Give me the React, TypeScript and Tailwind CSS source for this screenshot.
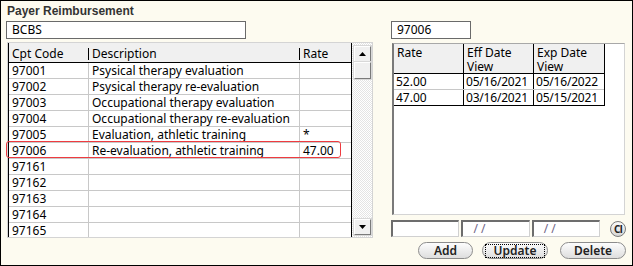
import React from 'react';

const codes = [
    { code: '97001', desc: 'Psysical therapy evaluation', rate: '' },
    { code: '97002', desc: 'Psysical therapy re-evaluation', rate: '' },
    { code: '97003', desc: 'Occupational therapy evaluation', rate: '' },
    { code: '97004', desc: 'Occupational therapy re-evaluation', rate: '' },
    { code: '97005', desc: 'Evaluation, athletic training', rate: '*' },
    { code: '97006', desc: 'Re-evaluation, athletic training', rate: '47.00' },
    { code: '97161', desc: '', rate: '' },
    { code: '97162', desc: '', rate: '' },
    { code: '97163', desc: '', rate: '' },
    { code: '97164', desc: '', rate: '' },
    { code: '97165', desc: '', rate: '' },
];

const rates = [
    { rate: '52.00', eff: '05/16/2021', exp: '05/16/2022' },
    { rate: '47.00', eff: '03/16/2021', exp: '05/15/2021' },
];

const ArrowBtn = ({ down }: { down?: boolean }) => (
    <div className="flex h-[16px] w-[17px] items-center justify-center border border-t-white border-l-white border-r-[#7a7a7a] border-b-[#7a7a7a] bg-[#f0f0f0] shadow-[0_0_0_1px_#d8d8d8]">
        <svg width="7" height="4" viewBox="0 0 7 4">
            {down ? <polygon points="0,0 7,0 3.5,4" fill="#000" /> : <polygon points="0,4 7,4 3.5,0" fill="#000" />}
        </svg>
    </div>
);

const PillButton = ({ label, width, focused }: { label: string; width: string; focused?: boolean }) => (
    <button
        className={`flex h-[17px] ${width} items-center justify-center rounded-full border border-[#8c8c8c] bg-gradient-to-b from-[#fdfdfd] to-[#dedede] text-[12px] font-semibold leading-none text-[#222]`}
    >
        {focused ? (
            <span className="flex h-[14px] w-[calc(100%-4px)] items-center justify-center border border-dotted border-black">{label}</span>
        ) : (
            label
        )}
    </button>
);

const dateBox =
    'flex h-[17px] w-[69px] items-center border-t-2 border-l-2 border-r border-b border-t-[#6d6d6d] border-l-[#6d6d6d] border-r-[#d0d0d0] border-b-[#d0d0d0] bg-white pl-[10px] leading-none text-[#6f6486]';

export default function App() {
    return (
        <div className="relative h-[266px] w-[633px] border border-black bg-[#fdfbf0] font-['Noto_Sans',sans-serif] text-[12px] text-black">
            <div className="h-[20px] pl-[6px] pt-[2px] font-['Liberation_Sans',Arial,sans-serif] text-[12px] font-bold leading-[16px] text-[#333]">
                Payer Reimbursement
            </div>

            <div className="flex">
                {/* left: payer codes */}
                <div className="ml-[5px] w-[367px]">
                    <div className="flex h-[18px] w-[240px] items-center border border-[#6a6a6a] bg-white pl-[5px] leading-none">BCBS</div>

                    <div className="ml-[1px] mt-[3px] flex h-[196px] w-[366px] border border-[#d4d4d4] bg-white">
                        <div className="w-[344px] overflow-hidden border-l border-r border-black">
                            <div className="flex h-[20px] items-center border-b border-black bg-[#f0f0f0] pt-[2px] leading-none">
                                <div className="w-[80px] border-r border-black pl-[3px]">Cpt Code</div>
                                <div className="w-[211px] border-r border-black pl-[3px]">Description</div>
                                <div className="flex-1 pl-[3px]">Rate</div>
                            </div>
                            {codes.map((r) => (
                                <div key={r.code} className="flex h-[16px] items-center border-b border-[#c8c8c8] leading-none">
                                    <div className="flex h-full w-[80px] items-center border-r border-[#c8c8c8] pl-[3px]">{r.code}</div>
                                    <div className="flex h-full w-[211px] items-center border-r border-[#c8c8c8] pl-[3px]">{r.desc}</div>
                                    <div className="flex h-full flex-1 items-center pl-[3px]">{r.rate}</div>
                                </div>
                            ))}
                        </div>
                        <div className="flex flex-1 flex-col items-center bg-[repeating-conic-gradient(#e4e4e4_0%_25%,#ffffff_0%_50%)] bg-[length:2px_2px] pt-[3px] pb-[2px]">
                            <ArrowBtn />
                            <div className="h-[17px] w-[17px] border border-t-white border-l-white border-r-[#7a7a7a] border-b-[#7a7a7a] bg-[#f0f0f0] shadow-[0_0_0_1px_#d8d8d8]" />
                            <div className="flex-1" />
                            <ArrowBtn down />
                        </div>
                    </div>
                </div>

                {/* right: rate history */}
                <div className="ml-[18px] w-[235px]">
                    <div className="flex h-[18px] w-[80px] items-center border border-[#6a6a6a] bg-white pl-[5px] leading-none">97006</div>

                    <div className="ml-[1px] mt-[4px] h-[172px] w-[233px] border-t border-l-2 border-r border-b border-t-[#a8a8a8] border-l-[#7a7a7a] border-r-[#d4d4d4] border-b-[#d4d4d4] bg-white">
                        <div className="w-[211px] border-r border-black">
                            <div className="flex h-[30px] border-b border-black bg-[#f0f0f0] leading-[14px]">
                                <div className="w-[70px] border-r border-black pl-[3px] pt-[2px]">Rate</div>
                                <div className="w-[70px] border-r border-black pl-[3px] pt-[2px]">Eff Date<br />View</div>
                                <div className="flex-1 pl-[3px] pt-[2px]">Exp Date<br />View</div>
                            </div>
                            {rates.map((r, i) => (
                                <div key={r.eff} className={`flex h-[16px] leading-none ${i === rates.length - 1 ? 'border-b border-black' : 'border-b border-[#c8c8c8]'}`}>
                                    <div className="flex w-[70px] items-center border-r border-black pl-[2px]">{r.rate}</div>
                                    <div className="flex w-[70px] items-center border-r border-black pl-[2px] tracking-[-0.2px]">{r.eff}</div>
                                    <div className="flex flex-1 items-center pl-[2px] tracking-[-0.2px]">{r.exp}</div>
                                </div>
                            ))}
                        </div>
                    </div>

                    <div className="mt-[5px] flex h-[17px] items-center gap-[2px]">
                        <div className={dateBox} />
                        <div className={dateBox}>/ /</div>
                        <div className={dateBox}>/ /</div>
                        <div className="ml-[8px] flex h-[16px] w-[16px] items-center justify-center rounded-full border border-[#7a7a7a] bg-gradient-to-b from-[#fafafa] to-[#d6d6d6] text-[10px] font-bold leading-none tracking-[-0.5px] text-[#222]">
                            Cl
                        </div>
                    </div>

                    <div className="mt-[5px] flex justify-end pr-[0px]">
                        <PillButton label="Add" width="w-[55px]" />
                        <div className="w-[9px]" />
                        <PillButton label="Update" width="w-[66px]" focused />
                        <div className="w-[12px]" />
                        <PillButton label="Delete" width="w-[66px]" />
                    </div>
                </div>
            </div>

            {/* selected row highlight */}
            <div className="pointer-events-none absolute left-[5px] top-[140px] h-[17px] w-[335px] rounded-[3px] border-[1.5px] border-[#ee3b40]" />
        </div>
    );
}
